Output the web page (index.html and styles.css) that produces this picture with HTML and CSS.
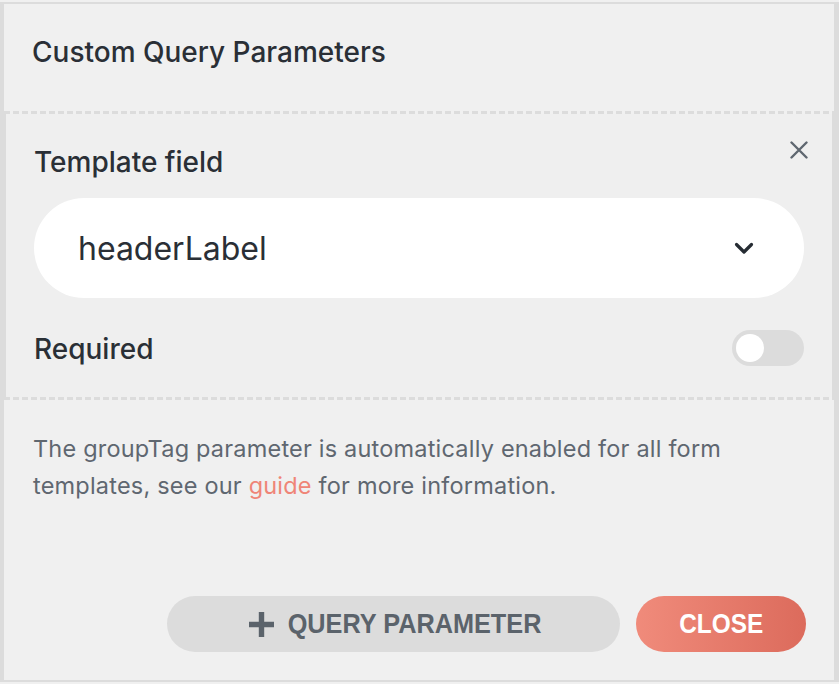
FILE: index.html
```html
<!DOCTYPE html>
<html>
<head>
<meta charset="utf-8">
<link rel="stylesheet" href="styles.css">
</head>
<body>
<div class="panel">
  <div class="header">
    <h2 class="title">Custom Query Parameters</h2>
  </div>
  <div class="divider"></div>
  <div class="item">
    <button class="remove" aria-label="Remove">
      <svg width="18" height="18" viewBox="0 0 18 18"><path d="M1.5 1.5 L16.5 16.5 M16.5 1.5 L1.5 16.5" stroke="#5f6770" stroke-width="2.4" stroke-linecap="round" fill="none"/></svg>
    </button>
    <div class="label">Template field</div>
    <div class="select">
      <span class="select-value">headerLabel</span>
      <svg class="chevron" width="20" height="13" viewBox="0 0 20 13"><path d="M2.5 2.5 L10 10 L17.5 2.5" stroke="#262c33" stroke-width="3.2" stroke-linecap="round" stroke-linejoin="round" fill="none"/></svg>
    </div>
    <div class="req-row">
      <div class="label req-label">Required</div>
      <div class="toggle"><div class="knob"></div></div>
    </div>
  </div>
  <div class="divider"></div>
  <div class="footer">
    <p class="note">The groupTag parameter is automatically enabled for all form templates, see our <a class="link" href="#">guide</a> for more information.</p>
    <div class="actions">
      <button class="btn btn-add">
        <svg class="plus" width="25" height="25" viewBox="0 0 25 25"><path d="M12.5 0 V25 M0 12.5 H25" stroke="#5b636b" stroke-width="5.4" fill="none"/></svg>
        <span class="btn-text add-text">QUERY PARAMETER</span>
      </button>
      <button class="btn btn-close"><span class="btn-text">CLOSE</span></button>
    </div>
  </div>
</div>
</body>
</html>
```
FILE: styles.css
```css
html, body {
  margin: 0;
  padding: 0;
  background: #f0f0f0;
}
body {
  font-family: Inter, "Noto Sans", sans-serif;
  color: #2a2f36;
}
.panel {
  margin-top: 2px;
  width: 830px;
  border-top: 2px solid #dcdcdc;
  border-bottom: 2px solid #dcdcdc;
  border-left: 4px solid #dcdcdc;
  border-right: 5px solid #dcdcdc;
  background: #f0f0f0;
  display: flex;
  flex-direction: column;
}
.header {
  height: 107px;
  box-sizing: border-box;
  padding: 31px 28px 0 28px;
}
.title {
  margin: 0;
  font-size: 28px;
  line-height: 34px;
  font-weight: 500;
  color: #2a2f36;
}
.divider {
  height: 3px;
  background: repeating-linear-gradient(to right, #dcdcdc 0 6px, transparent 6px 9px);
}
.item {
  position: relative;
  height: 283px;
  box-sizing: border-box;
  border-left: 2px solid #dcdcdc;
  border-right: 2px solid #dcdcdc;
  background: #efefef;
  padding: 31px 28px 0 28px;
}
.remove {
  position: absolute;
  top: 27px;
  right: 24px;
  width: 18px;
  height: 18px;
  padding: 0;
  border: 0;
  background: none;
  display: block;
}
.remove svg { display: block; }
.label {
  font-size: 28px;
  line-height: 34px;
  font-weight: 500;
  color: #2a2f36;
}
.select {
  margin-top: 19px;
  height: 100px;
  border-radius: 50px;
  background: #ffffff;
  display: flex;
  align-items: center;
  justify-content: space-between;
  padding: 0 50px 0 44px;
}
.select-value {
  font-size: 32px;
  line-height: 39px;
  color: #2a2f36;
}
.chevron { display: block; margin-top: 1px; }
.req-row {
  margin-top: 32px;
  height: 36px;
  display: flex;
  align-items: center;
  justify-content: space-between;
}
.req-label { padding-top: 2px; }
.toggle {
  width: 72px;
  height: 36px;
  border-radius: 18px;
  background: #dcdcdc;
  box-sizing: border-box;
  padding: 4px;
}
.knob {
  width: 28px;
  height: 28px;
  border-radius: 50%;
  background: #ffffff;
}
.footer {
  height: 280px;
  box-sizing: border-box;
  padding: 30px 28px 28px 29px;
  display: flex;
  flex-direction: column;
}
.note {
  margin: 0;
  font-size: 23.5px;
  letter-spacing: 0.2px;
  line-height: 37px;
  color: #5f6770;
}
.link {
  color: #ef8577;
  text-decoration: none;
}
.actions {
  margin-top: auto;
  display: flex;
  justify-content: flex-end;
  gap: 16px;
}
.btn {
  height: 56px;
  border: 0;
  border-radius: 28px;
  display: flex;
  align-items: center;
  font-family: "Liberation Sans", Arial, sans-serif;
  font-weight: 700;
  font-size: 28px;
  padding: 0;
  box-sizing: border-box;
}
.btn-text {
  display: inline-block;
  transform: scaleX(0.87);
  line-height: 32px;
}
.btn-add {
  width: 453px;
  background: #dcdcdc;
  color: #5b636b;
  justify-content: flex-start;
  padding-left: 82px;
}
.add-text { transform: scaleX(0.903); }
.plus { display: block; margin-right: 0; }
.btn-close {
  width: 170px;
  justify-content: center;
  color: #ffffff;
  background: linear-gradient(to right, #f08b7b, #dc6b5c);
}
```
